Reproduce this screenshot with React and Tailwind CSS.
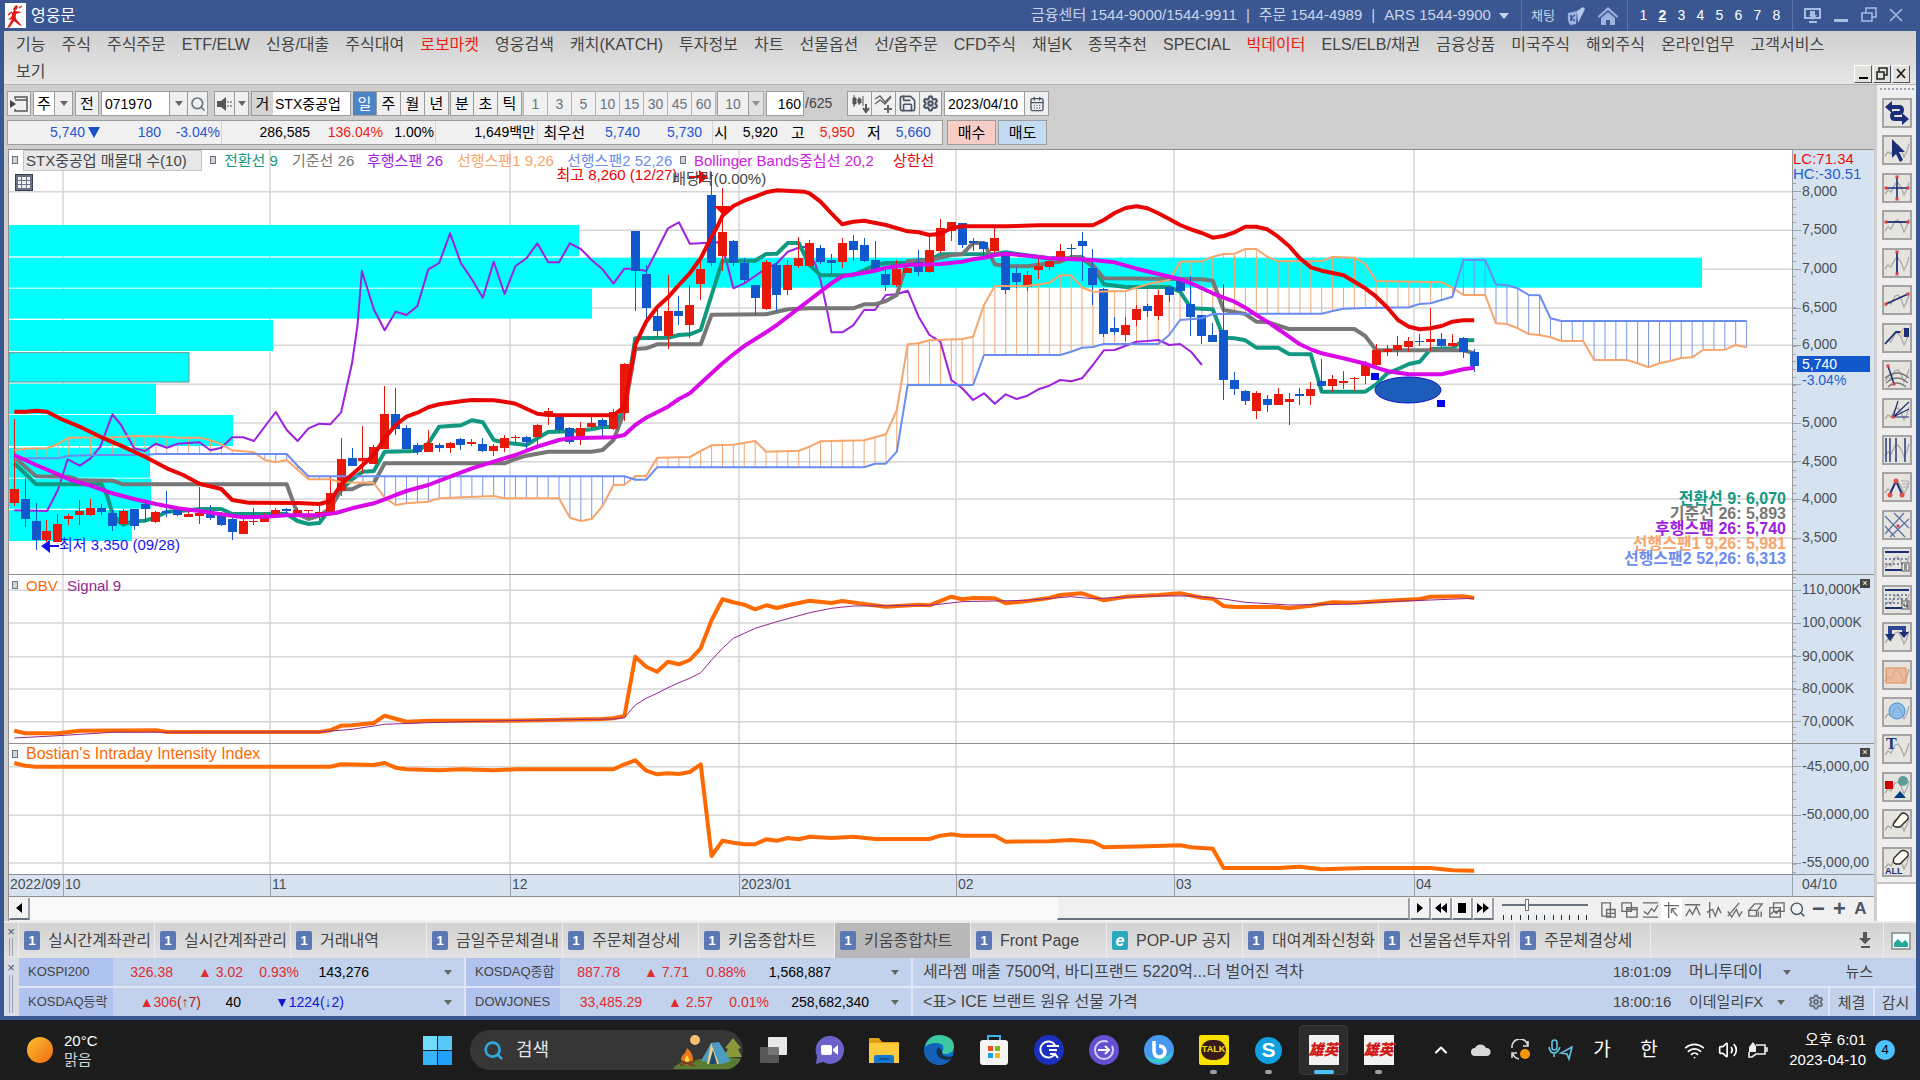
import { useState } from "react"
import { Search, Save, Settings, Wifi, Volume2, ChevronUp, CalendarDays } from "lucide-react"

const RED = "#e8190a"
const BLUE = "#1158cc"

// x position of a trading day and y position of a stored row (rows are thirds of a pixel)
const STEP = 10.895
const dayX = (i) => 5.3 + i * STEP
const rowY = (v, base = 15) => (v - base) / 3
const toPoints = (list, base) => list.map(([i, v]) => `${dayX(i).toFixed(1)},${rowY(v, base).toFixed(1)}`).join(" ")

// high, body top, body bottom, low, 1 = up
const candles = [
  [822, 1031, 1075, 1083, 1], [998, 1062, 1123, 1147, 0], [1073, 1129, 1185, 1215, 0], [1125, 1158, 1185, 1190, 1],
  [1107, 1137, 1190, 1190, 1], [1108, 1112, 1123, 1140, 1], [1065, 1098, 1109, 1140, 1], [1063, 1088, 1109, 1113, 1],
  [1077, 1088, 1101, 1109, 0], [1095, 1104, 1142, 1158, 0], [1093, 1098, 1137, 1142, 1], [1091, 1092, 1142, 1155, 0],
  [1067, 1077, 1093, 1132, 0], [1097, 1100, 1131, 1135, 1], [1038, 1098, 1105, 1117, 0], [1085, 1095, 1109, 1113, 0],
  [1088, 1107, 1116, 1117, 1], [1027, 1103, 1112, 1136, 1], [1080, 1101, 1119, 1124, 0], [1100, 1104, 1139, 1142, 0],
  [1120, 1121, 1161, 1184, 0], [1120, 1129, 1166, 1166, 1], [1090, 1128, 1131, 1139, 1], [1103, 1115, 1130, 1132, 1],
  [1090, 1095, 1115, 1117, 1], [1090, 1093, 1097, 1108, 0], [1090, 1095, 1109, 1115, 1], [1095, 1096, 1099, 1120, 1],
  [1083, 1100, 1116, 1125, 1], [993, 1044, 1108, 1108, 1], [878, 941, 1038, 1052, 1], [908, 938, 962, 962, 0],
  [843, 938, 947, 985, 1], [900, 905, 956, 958, 1], [723, 806, 911, 912, 1], [728, 806, 851, 870, 0],
  [840, 849, 911, 912, 0], [893, 899, 921, 930, 0], [855, 893, 921, 922, 1], [895, 900, 909, 922, 0],
  [892, 893, 909, 924, 1], [880, 881, 899, 915, 0], [883, 890, 897, 903, 1], [879, 896, 918, 920, 0],
  [897, 903, 917, 933, 1], [870, 878, 909, 922, 1], [870, 875, 879, 897, 1], [873, 875, 892, 912, 0],
  [836, 840, 877, 903, 1], [788, 799, 806, 840, 1], [809, 809, 855, 863, 0], [847, 849, 891, 898, 0],
  [831, 849, 883, 900, 1], [807, 833, 847, 855, 1], [820, 825, 843, 877, 0], [792, 802, 853, 855, 1],
  [655, 656, 804, 827, 1], [258, 258, 377, 497, 0], [360, 387, 490, 543, 0], [480, 514, 557, 575, 0],
  [390, 499, 574, 613, 1], [453, 499, 512, 540, 0], [420, 480, 541, 580, 1], [335, 372, 418, 465, 1],
  [80, 151, 355, 363, 0], [130, 262, 332, 378, 1], [285, 289, 354, 362, 0], [340, 354, 405, 410, 0],
  [420, 421, 460, 510, 0], [345, 350, 491, 495, 1], [350, 360, 449, 497, 0], [345, 360, 434, 450, 1],
  [275, 338, 362, 370, 1], [285, 293, 362, 363, 1], [300, 308, 352, 358, 0], [327, 346, 355, 388, 0],
  [279, 293, 352, 370, 1], [270, 289, 315, 348, 0], [280, 301, 348, 352, 0], [289, 346, 376, 377, 0],
  [370, 387, 419, 437, 0], [345, 372, 419, 427, 1], [355, 369, 385, 385, 1], [315, 352, 381, 392, 0],
  [277, 316, 381, 385, 1], [222, 248, 318, 325, 1], [230, 230, 257, 289, 1], [233, 234, 299, 308, 0],
  [278, 289, 295, 317, 0], [288, 292, 311, 332, 0], [243, 279, 318, 333, 1], [320, 320, 434, 448, 0],
  [367, 384, 411, 430, 0], [379, 390, 427, 437, 1], [331, 363, 374, 402, 1], [340, 349, 367, 375, 1],
  [297, 319, 341, 350, 1], [297, 308, 311, 337, 0], [262, 289, 302, 408, 0], [312, 368, 419, 480, 0],
  [430, 432, 567, 577, 0], [517, 548, 561, 570, 0], [517, 541, 570, 588, 1], [480, 492, 524, 543, 1],
  [477, 484, 498, 517, 0], [434, 450, 513, 525, 1], [425, 427, 449, 472, 0], [405, 409, 438, 440, 0],
  [393, 477, 516, 574, 0], [510, 511, 573, 597, 0], [533, 570, 592, 592, 0], [417, 555, 704, 765, 0],
  [682, 705, 731, 749, 0], [735, 738, 768, 780, 0], [738, 743, 798, 822, 1], [750, 761, 780, 802, 0],
  [730, 746, 780, 780, 1], [745, 761, 772, 840, 1], [730, 746, 752, 780, 0], [712, 731, 752, 780, 1],
  [641, 709, 722, 740, 0], [690, 701, 723, 740, 1], [678, 708, 714, 732, 1], [697, 698, 701, 737, 1],
  [648, 655, 692, 718, 1], [597, 614, 661, 670, 1], [600, 612, 621, 633, 1], [573, 600, 614, 633, 1],
  [575, 589, 607, 622, 1], [567, 589, 592, 603, 0], [490, 581, 592, 618, 1], [563, 581, 602, 605, 0],
  [567, 594, 604, 605, 1], [575, 579, 621, 640, 0], [612, 620, 664, 682, 0],
]

const upperBand = [[0,800],[1,800],[2,797],[3,800],[4.3,822],[6.2,848],[8,877],[10,905],[12,935],[14,970],[15.5,990],[17,1016],[19,1032],[20,1065],[21.5,1073],[26,1074],[28,1077],[29,1068],[30,1018],[31.7,968],[33,930],[34,880],[35,840],[36,815],[37,803],[38,787],[39,778],[41,769],[42,765],[44,766],[45,770],[46,776],[48,806],[49,810],[55,811],[56,785],[57,600],[57.7,550],[58,530],[59,487],[60,457],[61,420],[62,385],[63,340],[64,275],[64.6,240],[65,212],[66,183],[67,167],[68,155],[69,142],[70,136],[72.5,140],[73,145],[74,170],[75,205],[76,238],[77,230],[78,227],[80,240],[82,259],[83,262],[84,270],[85,266],[86,250],[87,244],[91,244],[94,241],[99,241],[100,225],[101,204],[102,189],[103,184],[104,190],[105,205],[106,222],[107,240],[108,253],[109,264],[110,278],[111,273],[112,262],[113,245],[114,245],[115,253],[116,275],[117,303],[118,340],[119,367],[120,377],[122,391],[123,410],[124,430],[125,455],[126,487],[127,525],[128,545],[129,553],[130,550],[131,543],[132,530],[133,526],[134,526]]
const midBand = [[0,930],[2,960],[4.3,992],[5,1003],[7,1022],[9,1045],[11,1062],[13,1077],[15,1090],[17,1098],[19,1108],[21,1117],[23,1115],[25,1111],[28,1110],[29.5,1104],[31,1090],[33,1075],[34,1063],[35,1050],[36,1038],[38,1020],[40,995],[42,970],[44,950],[46,930],[48,905],[50,885],[51,880],[53,878],[55,877],[56,870],[57,840],[58,818],[60,785],[61,762],[62,745],[63,715],[64,685],[65,655],[66,628],[67,603],[69,562],[70,540],[71,515],[73,465],[74,440],[75,415],[76,394],[78,383],[79,377],[80,368],[82,360],[85,357],[87,350],[88,343],[89,338],[90,330],[91,326],[93,332],[95,340],[99,345],[101,352],[103,371],[105,387],[107,403],[108,415],[110,445],[111,458],[112,470],[113,488],[114,510],[115,530],[116,552],[117,575],[118,598],[119,613],[120,625],[122,640],[124,656],[125,668],[126,678],[127,683],[128,688],[131,688],[132,680],[133,673],[134,668]]
const conversion = [[0,955],[2,1018],[8,1018],[8.5,1050],[9,1105],[9.6,1130],[10,1139],[11,1128],[12,1127],[13,1117],[14,1100],[16,1096],[17,1092],[19,1092],[20,1107],[25,1107],[26,1128],[27,1137],[28,1134],[29,1090],[30,1035],[31,1003],[32,980],[33,978],[34,920],[37,918],[38,895],[39,845],[41,841],[42,826],[43,832],[44,885],[45,893],[47,900],[48,880],[49,861],[51,859],[53,853],[54,846],[55,846],[56,790],[57,580],[60,578],[61,570],[62,568],[63,555],[64,450],[65,347],[68,347],[69,327],[70,326],[71,294],[72,294],[73,360],[74,391],[77,391],[79,360],[80,354],[82,354],[83,345],[84,345],[85,328],[90,327],[91,322],[95,340],[98,340],[99,365],[100,418],[102,426],[106,426],[107,440],[108,490],[110,493],[111,578],[112,580],[113,586],[114,608],[116,608],[117,627],[119,628],[120,740],[124,740],[125,718],[126,685],[127,672],[128,657],[129,650],[130,612],[132,610],[133,586],[134,586]]
const baseLine = [[0,935],[1,965],[2,994],[5,995],[6,1006],[9,1007],[10,1018],[25,1018],[26,1107],[27,1122],[28,1112],[29,1090],[30,1033],[31,1033],[32,1017],[33,1015],[34,955],[45,955],[46,942],[47,932],[49,920],[53,920],[54,915],[55,885],[56,800],[57,612],[58,610],[59,598],[63,598],[64,509],[69,508],[71,493],[73,490],[77,490],[78,478],[79,478],[80,468],[81,450],[82,348],[84,346],[86,330],[87,328],[88,294],[89,294],[90,358],[91,364],[93,364],[96,350],[97,336],[98,336],[99,360],[100,400],[109,403],[110,407],[111,495],[113,507],[114,530],[115,531],[117,552],[123,552],[124,573],[125,616],[133,616],[134,625]]
const lagging = [[0,1096],[3,1098],[4,1035],[4.9,943],[6,962],[7,940],[7.9,905],[9,808],[9.8,840],[11,910],[12,918],[13,896],[14,908],[15,896],[17,892],[18,916],[19,908],[20,877],[21,877],[22,888],[24,801],[25,855],[26,888],[27,850],[28,836],[29,838],[30,802],[31,655],[31.5,540],[31.9,378],[33,493],[34,556],[35,500],[36,510],[37,483],[38,373],[39,354],[40,265],[41,355],[42,403],[43,458],[44,350],[45,447],[46,363],[47,340],[48,295],[49,352],[50,352],[51,295],[52,312],[53,345],[54,373],[55,416],[56,371],[57,371],[58,378],[59,315],[60,250],[61,232],[62,296],[64.6,292],[65.3,340],[66,430],[67,415],[68,393],[69,370],[70,355],[71,320],[72,308],[72.6,305],[73.5,355],[74,405],[74.5,480],[75,562],[76,562],[77,541],[78,495],[79,495],[80,450],[81,448],[82,437],[83,515],[84,570],[85,590],[86,705],[87,730],[88,765],[89,745],[90,776],[91,748],[92,762],[93,752],[94,733],[95,722],[96,705],[97,709],[98,700],[99,660],[100,616],[101,615],[102,602],[103,590],[104,588],[105,585],[106,600],[107,597],[108,620],[109,660]]
const spanA = [[0,915],[1,911],[3,910],[4,897],[5,878],[9,877],[11,873],[14,875],[15,878],[17,878],[18,886],[19,898],[20,916],[22,922],[23,945],[24,952],[25,945],[27,1003],[29,1003],[30,1012],[33,1014],[34,1058],[35,1080],[36,1075],[38,1070],[39,1060],[44,1053],[45,1060],[50,1060],[51,1118],[52,1128],[53,1122],[54,1083],[55,1020],[56,1019],[57,993],[58,993],[59,938],[62,936],[63,918],[64,901],[66,899],[68,888],[69,920],[72,917],[73,905],[74,889],[78,886],[80,868],[81,795],[82,598],[83,595],[84,586],[87,582],[88,575],[89,480],[90,423],[93,423],[95,413],[96,391],[97,391],[98,427],[99,440],[102,438],[104,418],[106,405],[107,350],[109,349],[110,335],[111,327],[112,326],[113,312],[114,312],[115,335],[116,349],[120,348],[121,336],[123,338],[124,357],[125,408],[131,412],[132,428],[133,450],[135,450],[136,535],[137,537],[138,550],[139,567],[140,570],[141,577],[142,588],[144,588],[145,645],[148,645],[149,655],[150,667],[151,655],[152,648],[153,639],[154,637],[155,615],[157,614],[158,600],[159,607]]
const spanB = [[0,940],[4,940],[5,932],[8,930],[12,930],[13,927],[25,927],[26,962],[27,994],[56,994],[57,1004],[58,1004],[59,967],[78,967],[79,956],[80,956],[81,920],[82,720],[88,720],[89,630],[96,630],[97,620],[98,608],[99,606],[100,597],[105,597],[106,570],[107,525],[109,520],[110,507],[120,506],[121,498],[122,491],[124,489],[128,487],[129,477],[130,475],[132,455],[133,345],[135,345],[136,418],[137,421],[138,430],[139,450],[140,451],[141,520],[142,528],[159,528]]
const obv = [[0,482],[1,490],[4,490],[6,482],[13,481],[14,486],[28,486],[29,481],[30,467],[31,466],[33,459],[34,437],[36,455],[38,452],[45,452],[54,447],[55,445],[56,438],[57,260],[58,290],[59,305],[60,275],[61,283],[62,270],[63,235],[64,150],[65,88],[66,97],[67,104],[68,118],[69,106],[70,114],[71,106],[73,92],[75,99],[76,93],[78,102],[80,110],[83,104],[84,106],[86,80],[87,88],[88,84],[90,85],[91,100],[93,93],[95,84],[96,75],[98,70],[100,91],[102,80],[105,75],[107,70],[109,83],[110,86],[111,108],[112,111],[116,111],[117,115],[119,107],[121,97],[123,98],[126,92],[129,87],[130,80],[133,79],[134,84]]
const signal = [[0,504],[4,497],[9,487],[28,486],[31,478],[34,463],[38,458],[45,452],[55,447],[56,443],[57,405],[58,385],[59,370],[60,353],[61,338],[62,325],[63,308],[64,270],[65,235],[66,205],[67,190],[68,175],[70,155],[73,128],[75,115],[77,108],[84,106],[87,95],[93,91],[97,80],[99,86],[104,78],[108,78],[111,87],[113,97],[117,105],[122,103],[126,95],[130,90],[134,85]]
const intensity = [[0,579],[1,587],[2,590],[29,590],[30,583],[33,585],[34,579],[35,593],[36,598],[39,601],[41,598],[44,601],[46,598],[55,598],[56,583],[57,571],[58,602],[59,613],[60,610],[61,612],[62,606],[63,583],[64,858],[65,812],[66,818],[67,823],[68,823],[69,808],[70,812],[71,804],[72,808],[73,800],[75,804],[77,800],[79,807],[84,807],[85,797],[86,793],[87,797],[90,797],[91,815],[95,814],[97,810],[99,815],[100,832],[104,829],[107,826],[108,832],[110,836],[111,894],[116,894],[118,890],[120,898],[124,894],[130,894],[132,901],[134,902]]

// top, bottom, width of each price band
const volumeBars = [
  [240, 334, 570], [338, 428, 1693], [431, 521, 583], [525, 618, 264], [623, 711, 180],
  [716, 807, 147], [810, 903, 224], [908, 998, 141], [1001, 1091, 142], [1095, 1188, 123],
]
const months = [54, 261, 501, 730, 947, 1165, 1405]

function valueAt(list, i) {
  for (let k = 1; k < list.length; k++) {
    const [a, va] = list[k - 1]
    const [b, vb] = list[k]
    if (i <= b) return va + ((vb - va) * (i - a)) / (b - a)
  }
  return list[list.length - 1][1]
}

function Grid({ rows, base, height }) {
  return (
    <g stroke="#d6d6d6" strokeWidth="1.5">
      {rows.map((v) => <line key={v} x1="0" x2="1783" y1={rowY(v, base)} y2={rowY(v, base)} />)}
      {months.map((x) => <line key={x} x1={x} x2={x} y1="0" y2={height} />)}
    </g>
  )
}

function Line({ data, base, color, width = 2 }) {
  return <polyline points={toPoints(data, base)} fill="none" stroke={color} strokeWidth={width} strokeLinejoin="round" />
}

function Axis({ rows, labels, base, height, minor, start }) {
  const gap = rows[1] - rows[0]
  const ticks = []
  for (let v = rows[0] - gap * 6; v < height * 3 + base; v += gap / minor) {
    if (v > start) ticks.push(v)
  }
  return (
    <svg className="block h-full w-full" viewBox={`0 0 81 ${height}`}>
      <g stroke="#9aa2aa" shapeRendering="crispEdges">
        {ticks.map((v) => <line key={v} x1="0" x2="3" y1={rowY(v, base)} y2={rowY(v, base)} />)}
        {rows.map((v) => <line key={v} x1="0" x2="8" y1={rowY(v, base)} y2={rowY(v, base)} />)}
      </g>
      {rows.map((v, k) => (
        <text key={v} x="9" y={rowY(v, base) + 4} fontSize="14" fill="#4a4e54">{labels[k]}</text>
      ))}
    </svg>
  )
}

function Marker() {
  return <span className="h-[8px] w-[6px] shrink-0 border border-gray-500 bg-gray-300" />
}

const priceRows = [140, 256, 373, 489, 601, 718, 834, 950, 1062, 1179]
const priceLabels = ["8,000", "7,500", "7,000", "6,500", "6,000", "", "5,000", "4,500", "4,000", "3,500"]

function PricePanel() {
  const hatch = []
  for (let i = 0; i < 160; i++) {
    const a = valueAt(spanA, i)
    const b = valueAt(spanB, i)
    if (Math.abs(a - b) > 8) hatch.push([i, a, b])
  }
  return (
    <section className="flex h-[425px] border-b border-[#8f8f8f]">
      <div className="relative min-w-0 flex-1">
        <svg className="block h-full w-full" viewBox="0 0 1783 424" preserveAspectRatio="none">
          <Grid rows={priceRows} base={15} height={424} />
          {volumeBars.map(([t, b, w], k) => (
            <rect key={t} x="0" y={rowY(t)} width={w} height={(b - t) / 3} fill="#00ffff" stroke={k === 4 ? "#6d8f8f" : "none"} />
          ))}
          {hatch.map(([i, a, b]) => (
            <line key={i} x1={dayX(i)} x2={dayX(i)} y1={rowY(a)} y2={rowY(b)} stroke={a < b ? "#f4a66e" : "#7a96ec"} />
          ))}
          <Line data={lagging} color="#a020e0" />
          <Line data={conversion} color="#119880" width={4} />
          <Line data={baseLine} color="#777777" width={4} />
          <g shapeRendering="crispEdges">
            {candles.map(([h, t, b, l, up], i) => (
              <g key={i} fill={up ? RED : BLUE}>
                <rect x={dayX(i) - 0.5} y={rowY(h)} width="1" height={(l - h) / 3} />
                <rect x={dayX(i) - 4.5} y={rowY(t)} width="9" height={Math.max((b - t) / 3, 1)} />
              </g>
            ))}
          </g>
          <Line data={spanA} color="#f8a56c" />
          <Line data={spanB} color="#6b8cf0" />
          <Line data={midBand} color="#d808e8" width={4} />
          <Line data={upperBand} color="#ea0505" width={4} />
          <path d="M705 56h18l-9 9z" fill="#f00" />
          <path d="M680 26h10v-6l9 7l-9 7v-6h-10z" fill="#f00" />
          <path d="M32 396l9-6v5h9v2h-9v6z" fill="#1414f0" />
          <ellipse cx="1399" cy="240" rx="33" ry="13" fill="#1e5cba" stroke="#0a14c8" />
          <rect x="1362" y="223" width="8" height="7" fill="#0000ff" />
          <rect x="1428" y="250" width="8" height="7" fill="#0000ff" />
        </svg>
        <div className="absolute left-[3px] top-0 flex h-[20px] items-center whitespace-nowrap text-[15px] leading-none">
          <Marker />
          <span className="ml-[5px] w-[179px] overflow-hidden border border-[#c4c4c4] bg-[#e8e8e8] p-[2px] text-[#444]">STX중공업 매물대 수(10)</span>
          <span className="ml-[8px] flex items-center"><Marker /></span>
          <span className="ml-[8px] w-[68px] text-[#119880]">전환선 9</span>
          <span className="w-[75px] text-[#777]">기준선 26</span>
          <span className="w-[90px] text-[#a020e0]">후행스팬 26</span>
          <span className="w-[110px] text-[#f8a56c]">선행스팬1 9,26</span>
          <span className="w-[113px] text-[#6b8cf0]">선행스팬2 52,26</span>
          <Marker />
          <span className="ml-[8px] w-[199px] text-[#d020e0]">Bollinger Bands중심선 20,2</span>
          <span className="text-[#ea0505]">상한선</span>
        </div>
        <button aria-label="데이터 표" className="absolute left-[6px] top-[24px] grid h-[17px] w-[18px] grid-cols-3 gap-px border border-gray-700 bg-gray-500 p-[2px]">
          {Array.from({ length: 9 }, (_, k) => <span key={k} className="bg-gray-100" />)}
        </button>
        <span className="absolute left-[30.7%] top-[16px] whitespace-nowrap text-[15px] leading-[18px] text-[#f00000]">최고 8,260 (12/27)</span>
        <span className="absolute left-[37.2%] top-[20px] whitespace-nowrap text-[15px] leading-[18px] text-[#444]">배당락(0.00%)</span>
        <span className="absolute left-[2.8%] top-[386px] whitespace-nowrap text-[15px] leading-[18px] text-[#1414f0]">최저 3,350 (09/28)</span>
        <div className="absolute bottom-[8px] right-[6px] text-right text-[16px] font-bold leading-[15px]">
          <p className="text-[#119880]">전환선 9: 6,070</p>
          <p className="text-[#777]">기준선 26: 5,893</p>
          <p className="text-[#a020e0]">후행스팬 26: 5,740</p>
          <p className="text-[#f8a56c]">선행스팬1 9,26: 5,981</p>
          <p className="text-[#6b8cf0]">선행스팬2 52,26: 6,313</p>
        </div>
      </div>
      <div className="relative w-[82px] border-l border-[#9a9a9a] bg-[#d6e2f0]">
        <Axis rows={priceRows} labels={priceLabels} base={15} height={424} minor={5} start={100} />
        <div className="absolute left-0 top-px whitespace-nowrap text-[15px] leading-[15px]">
          <p className="text-[#e81010]">LC:71.34</p>
          <p className="text-[#2060d0]">HC:-30.51</p>
        </div>
        <div className="absolute left-[4px] top-[206px] w-[73px] text-[14px] leading-[16px]">
          <p className="bg-[#1158cc] pl-[5px] text-white">5,740</p>
          <p className="pl-[5px] text-[#2060d0]">-3.04%</p>
        </div>
      </div>
    </section>
  )
}

function CloseMark() {
  return <button aria-label="닫기" className="absolute right-[4px] top-[4px] flex h-[9px] w-[10px] items-center justify-center bg-[#444] text-[9px] leading-none text-white">×</button>
}

function ObvPanel() {
  const rows = [61, 159, 260, 357, 455]
  return (
    <section className="flex h-[169px] border-b border-[#8f8f8f]">
      <div className="relative min-w-0 flex-1">
        <svg className="block h-full w-full" viewBox="0 0 1783 168" preserveAspectRatio="none">
          <Grid rows={rows} base={15} height={168} />
          <Line data={obv} base={15} color="#ff6a00" width={4} />
          <Line data={signal} base={15} color="#92278f" width={1} />
        </svg>
        <div className="absolute left-[3px] top-0 flex h-[20px] items-center text-[15px] leading-none">
          <Marker />
          <span className="ml-[8px] w-[41px] text-[#ff6a00]">OBV</span>
          <span className="text-[#92278f]">Signal 9</span>
        </div>
      </div>
      <div className="relative w-[82px] border-l border-[#9a9a9a] bg-[#d6e2f0]">
        <Axis rows={rows} labels={["110,000K", "100,000K", "90,000K", "80,000K", "70,000K"]} base={15} height={168} minor={5} start={20} />
        <CloseMark />
      </div>
    </section>
  )
}

function IntensityPanel() {
  const rows = [590, 736, 879]
  return (
    <section className="flex h-[131px] border-b border-[#8f8f8f]">
      <div className="relative min-w-0 flex-1">
        <svg className="block h-full w-full" viewBox="0 0 1783 130" preserveAspectRatio="none">
          <Grid rows={rows} base={522} height={130} />
          <Line data={intensity} base={522} color="#ff6a00" width={4} />
        </svg>
        <div className="absolute left-[3px] top-0 flex h-[20px] items-center text-[16px] leading-none">
          <Marker />
          <span className="ml-[8px] text-[#ff6a00]">Bostian's Intraday Intensity Index</span>
        </div>
      </div>
      <div className="relative w-[82px] overflow-hidden border-l border-[#9a9a9a] bg-[#d6e2f0]">
        <Axis rows={rows} labels={["-45,000,00", "-50,000,00", "-55,000,00"]} base={522} height={130} minor={6} start={530} />
        <CloseMark />
      </div>
    </section>
  )
}

function DateRow() {
  return (
    <div className="flex h-[22px] border-b border-[#8f8f8f] bg-[#d6e2f0] text-[14px] leading-[18px] text-[#4a4e54]">
      <span className="w-[54px] pl-px">2022/09</span>
      <span className="w-[207px] border-l border-gray-400 pl-px">10</span>
      <span className="w-[240px] border-l border-gray-400 pl-px">11</span>
      <span className="w-[229px] border-l border-gray-400 pl-px">12</span>
      <span className="w-[217px] border-l border-gray-400 pl-px">2023/01</span>
      <span className="w-[218px] border-l border-gray-400 pl-px">02</span>
      <span className="w-[240px] border-l border-gray-400 pl-px">03</span>
      <span className="min-w-0 flex-1 border-l border-gray-400 pl-px">04</span>
      <span className="w-[82px] border-l border-gray-400 pl-[9px]">04/10</span>
    </div>
  )
}

const miniIcons = [
  "M3 3h9v14h-9zM8 10h9v8h-9zM12 10v8M8 14h9",
  "M2 3h10v9h-10zM7 8h11v10h-11zM7 10h11",
  "M2 3h16M2 18h16M3 12l4 3l4-6l3 3l4-7",
  "M2 6h16M7 2v17M10 9l6 8M10 9v5M10 9h5",
  "M2 5h16M3 17l4-7l3 5l4-8l4 9",
  "M6 2v17M3 13l6-3l3 7l3-9l3 6",
  "M3 17l12-14M3 12l4 6l5-8l3 7l3-5",
  "M3 11l6-7h8l-5 7zM3 11v6h8v-6M13 12v6M16 12v6",
  "M7 3h11v9h-11zM3 8h11v10h-11zM4 15l3-3l3 2l3-4",
]

function ScrollRow() {
  const play = "flex w-[21px] shrink-0 items-center justify-center border-b-2 border-r-2 border-l border-b-gray-500 border-r-gray-400 border-l-white bg-[#f2f2f2] text-black"
  return (
    <div className="flex h-[24px] items-stretch bg-[#f0f0f0] py-px">
      <button aria-label="왼쪽으로" className={play}>
        <svg width="6" height="10"><path d="M6 0v10L0 5z" /></svg>
      </button>
      <div className="flex min-w-0 flex-1 justify-end bg-[#f9f9f9]">
        <div className="w-[353px] border-b-2 border-r-2 border-l border-b-gray-500 border-r-gray-400 border-l-white bg-[#f0f0f0]" />
      </div>
      <button aria-label="재생" className={play}><svg width="6" height="10"><path d="M0 0v10l6-5z" /></svg></button>
      <button aria-label="뒤로" className={play}><svg width="12" height="10"><path d="M6 0v10L0 5zM12 0v10L6 5z" /></svg></button>
      <button aria-label="정지" className={play}><svg width="8" height="10"><path d="M0 0h8v10H0z" /></svg></button>
      <button aria-label="앞으로" className={play}><svg width="12" height="10"><path d="M0 0v10l6-5zM6 0v10l6-5z" /></svg></button>
      <div className="flex w-[104px] flex-col items-center justify-between pr-[2px] pt-[6px]">
        <input type="range" aria-label="확대 비율" defaultValue="28" className="h-[2px] w-[86px] appearance-none bg-gray-500 [&::-webkit-slider-thumb]:h-[12px] [&::-webkit-slider-thumb]:w-[4px] [&::-webkit-slider-thumb]:appearance-none [&::-webkit-slider-thumb]:border [&::-webkit-slider-thumb]:border-gray-500 [&::-webkit-slider-thumb]:bg-white" />
        <div className="flex w-[84px] justify-between">
          {Array.from({ length: 11 }, (_, k) => <span key={k} className="h-[5px] w-px bg-gray-800" />)}
        </div>
      </div>
      <div className="flex pr-[3px]">
        {miniIcons.map((d, k) => (
          <button key={d} aria-label={`차트 도구 ${k + 1}`} className={`flex w-[21px] shrink-0 items-center justify-center ${k === 3 ? "bg-white" : ""}`}>
            <svg width="19" height="19" viewBox="0 0 20 20" fill="none" stroke="#6a6a6a" strokeWidth="1.4"><path d={d} /></svg>
          </button>
        ))}
        <button aria-label="돋보기" className="flex w-[21px] shrink-0 items-center justify-center text-gray-600"><Search size={17} /></button>
        <button className="w-[21px] shrink-0 text-[22px] font-bold leading-[20px] text-gray-600">−</button>
        <button className="w-[21px] shrink-0 text-[22px] font-bold leading-[20px] text-gray-600">+</button>
        <button className="w-[21px] shrink-0 text-[17px] font-bold leading-[22px] text-gray-600">A</button>
      </div>
    </div>
  )
}

function Wave() {
  return <path d="M3 21l3-4l3 2l4-8l3-1l3 4l3 8l3-6l2-7" fill="none" stroke="#a9a9a9" strokeWidth="1.3" />
}

function Dot({ x, y }) {
  return <rect x={x - 1.5} y={y - 1.5} width="3" height="3" fill="#e04040" />
}

const N = "#1c2f78"
const drawTools = [
  ["순환", <g key="i"><path d="M9 9h8q3 0 3 3t-3 3h-4q-3 0-3 3t3 3h8" fill="none" stroke={N} strokeWidth="4" /><path d="M10 3v12L3 9zM20 15v12l7-6z" fill={N} /></g>],
  ["선택", <path key="i" d="M10 4v19l4-4l4 8l3-2l-4-8h6z" fill={N} />],
  ["십자선", <g key="i"><path d="M3 15h24M15 3v24" stroke={N} strokeWidth="1.6" /><Dot x={4} y={15} /><Dot x={26} y={15} /><Dot x={15} y={4} /><Dot x={15} y={26} /></g>],
  ["수평선", <g key="i"><path d="M3 12h24" stroke={N} strokeWidth="1.8" /><Dot x={4} y={12} /><Dot x={26} y={12} /></g>],
  ["수직선", <g key="i"><path d="M15 3v24" stroke={N} strokeWidth="1.8" /><Dot x={15} y={4} /><Dot x={15} y={26} /></g>],
  ["추세선", <g key="i"><path d="M4 19l22-10" stroke={N} strokeWidth="1.6" /><Dot x={4} y={19} /><Dot x={26} y={9} /></g>],
  ["연필", <g key="i"><path d="M3 21L14 9h5" fill="none" stroke={N} strokeWidth="1.8" /><path d="M18 9l4-4h5v9h-5z" fill={N} /><path d="M18 9l4-4v9z" fill="#f3d38a" /></g>],
  ["피보나치 원", <g key="i"><path d="M3 18q12-10 24 0M4 23q11-10 22 0M6 27q9-8 18 0" fill="none" stroke="#777" strokeWidth="1.3" /><path d="M6 6l6 18" stroke={N} strokeWidth="1.5" /><Dot x={6} y={6} /><Dot x={12} y={24} /></g>],
  ["부채꼴", <g key="i"><path d="M11 19L16 3M11 19L27 4M11 19L27 11M11 19h16" stroke={N} strokeWidth="1.2" /><Dot x={11} y={19} /></g>],
  ["시간대", <path key="i" d="M4 3v24M8 3v24M14 3v24M23 3v24" stroke={N} strokeWidth="1.4" />],
  ["파동", <g key="i"><path d="M8 22l6-13l6 13" fill="none" stroke={N} strokeWidth="2" /><circle cx="14" cy="9" r="2.5" fill="#e05050" /><circle cx="8" cy="23" r="2.5" fill="#e05050" /><circle cx="20" cy="23" r="2.5" fill="#e05050" /><path d="M19 9h7M20 12h7M21 15h6" stroke="#aaa" /></g>],
  ["격자", <g key="i"><path d="M3 6l20 21M12 3l15 15M3 24L22 3M8 27L27 9M3 16l10 11" stroke="#5870a8" strokeWidth="1.2" /><Dot x={16} y={16} /></g>],
  ["3등분선", <g key="i"><path d="M3 5h24M3 23h24" stroke={N} strokeWidth="2" /><path d="M3 12h24M3 17h24" stroke={N} strokeDasharray="2 2" /><rect x="20" y="16" width="7" height="8" fill="#eee" stroke="#555" /><path d="M22 18h3M22 20h3M22 22h3" stroke="#333" /></g>],
  ["4등분선", <g key="i"><path d="M3 5h24M3 23h24" stroke={N} strokeWidth="2" /><path d="M3 10h24M3 14h24M3 18h24" stroke={N} strokeDasharray="2 2" /><rect x="20" y="16" width="7" height="8" fill="#eee" stroke="#555" /><path d="M25 17v6M22 18v3h4" stroke="#333" fill="none" /></g>],
  ["되돌림", <g key="i"><path d="M8 14V6h14v5" fill="none" stroke="#2c4594" strokeWidth="4" /><path d="M3 12h10l-5 7zM17 10h10l-5 6z" fill={N} /></g>],
  ["사각형", <rect key="i" x="4" y="8" width="20" height="15" fill="#f0a880" fillOpacity="0.7" stroke="#e88850" />],
  ["원", <circle key="i" cx="15" cy="14" r="8" fill="#70b0ea" fillOpacity="0.75" stroke="#4890d8" />],
  ["문자", <text key="i" x="4" y="15" fontSize="16" fontWeight="700" fontFamily="Liberation Serif, serif" fill={N}>T</text>],
  ["도형", <g key="i"><rect x="3" y="9" width="8" height="8" fill="#d00000" /><circle cx="21" cy="9" r="5" fill="#5f9c98" /><path d="M18 19l6 7H12z" fill="#003c80" /></g>],
  ["지우개", <path key="i" d="M12 14l7-9q2-2 5 0l2 2q1 2-1 4l-7 7h-4q-4-1-2-4z" fill="#fffdf2" stroke="#222" strokeWidth="1.3" />],
  ["모두 지우기", <g key="i"><path d="M12 11l7-7q2-1 5 0l2 2q1 2-1 4l-7 7h-4q-4-1-2-6z" fill="#fffdf2" stroke="#222" strokeWidth="1.3" /><text x="3" y="27" fontSize="9" fontWeight="700" fill={N}>ALL</text></g>],
]

function DrawToolbar() {
  return (
    <aside className="flex w-[39px] shrink-0 flex-col bg-white">
      <div className="flex h-[799px] flex-col items-center border-b-2 border-[#c4c4c4] bg-[#efefef] pb-[5px] pt-[3px]">
        <div className="mb-[8px] h-0 w-[34px] border-t-2 border-dotted border-gray-400" />
        <div className="flex flex-1 flex-col justify-between">
          {drawTools.map(([label, icon]) => (
            <button key={label} aria-label={label} className="h-[30px] w-[30px] border-2 border-[#a4a4a4] bg-[#e5e4df]">
              <svg className="h-full w-full" viewBox="2 2 26 26">
                {label !== "순환" && label !== "격자" && <Wave />}
                {icon}
              </svg>
            </button>
          ))}
        </div>
      </div>
    </aside>
  )
}

function KiwoomMark() {
  return (
    <svg className="h-[25px] w-[21px] bg-white" viewBox="0 0 21 25">
      <path d="M11 2q3 1 1 4l-2 2l7 1l-6 2q-1 4 1 6l5 6l-3-1l-5-4l-4 6l-3 1l5-9l-4 1l4-4q-1-3 2-5l-1-2z" fill="#e01818" />
      <path d="M3 12l4-3M14 5l3-2" stroke="#e01818" strokeWidth="1.5" />
    </svg>
  )
}

function TitleBar() {
  const [screen, setScreen] = useState(2)
  return (
    <header className="flex h-[31px] items-center bg-[#3a5791] pl-[5px] text-[#c9d4ea]">
      <KiwoomMark />
      <h1 className="ml-[5px] flex-1 text-[16px] leading-none text-white">영웅문</h1>
      <p className="flex w-[468px] gap-[9px] whitespace-nowrap text-[15px]">
        <span>금융센터 1544-9000/1544-9911</span>
        <span>|</span>
        <span>주문 1544-4989</span>
        <span>|</span>
        <span>ARS 1544-9900</span>
      </p>
      <button aria-label="전화번호 더보기" className="w-[22px]">
        <svg width="10" height="6"><path d="M0 0h10L5 6z" fill="#c9d4ea" /></svg>
      </button>
      <div className="flex h-full w-[106px] items-center border-l border-[#5874aa] pl-[9px] text-[13px]">
        <button className="w-[35px] text-left">채팅</button>
        <button aria-label="키움" className="w-[32px]">
          <svg width="20" height="20" viewBox="0 0 20 20"><path d="M2 7l9-2l-1 13l-6 1q-3-5-2-12z" fill="#9db2de" /><path d="M11 5l6-4l2 2l-7 14z" fill="#b9c8ea" /><path d="M5 9v6M5 12l4-3M5 12l4 3" stroke="#3a5791" strokeWidth="1.5" /></svg>
        </button>
        <button aria-label="홈">
          <svg width="20" height="18" fill="#9db2de"><path d="M10 0l10 9l-1 2l-9-8l-9 8l-1-2z" /><path d="M3 11l7-6l7 6v7h-5v-5h-4v5H3z" /></svg>
        </button>
      </div>
      <nav className="flex h-full w-[165px] items-center border-l border-[#5874aa] pl-[6px]">
        {[1, 2, 3, 4, 5, 6, 7, 8].map((n) => (
          <button key={n} onClick={() => setScreen(n)} className={`w-[19px] text-[14px] leading-[17px] text-white ${screen === n ? "font-bold underline" : ""}`}>{n}</button>
        ))}
      </nav>
      <div className="flex h-full w-[128px] items-center gap-[12px] border-l border-[#5874aa] pl-[11px]">
        <button aria-label="화면"><svg width="17" height="17" fill="none" stroke="#a9bce4" strokeWidth="2"><path d="M1 2h15v9H1zM5 15h8" /><path d="M6 4h5v4h2l-4 5l-4-5h1z" fill="#a9bce4" stroke="none" /></svg></button>
        <button aria-label="최소화"><svg width="16" height="17"><path d="M1 12h14v3H1z" fill="#a9bce4" /></svg></button>
        <button aria-label="이전 크기"><svg width="16" height="17" fill="none" stroke="#a9bce4" strokeWidth="1.5"><path d="M5 6V1h10v9h-4M1 6h10v8H1z" /></svg></button>
        <button aria-label="닫기"><svg width="14" height="17" stroke="#a9bce4" strokeWidth="1.5"><path d="M1 2l12 12M13 2L1 14" /></svg></button>
      </div>
    </header>
  )
}

const menuItems = ["기능", "주식", "주식주문", "ETF/ELW", "신용/대출", "주식대여", "로보마켓", "영웅검색", "캐치(KATCH)", "투자정보", "차트", "선물옵션", "선/옵주문", "CFD주식", "채널K", "종목추천", "SPECIAL", "빅데이터", "ELS/ELB/채권", "금융상품", "미국주식", "해외주식", "온라인업무", "고객서비스", "보기"]

function MenuBar() {
  const mdi = "flex h-[18px] w-[18px] items-end justify-center border border-t-white border-l-white border-b-gray-600 border-r-gray-600 bg-[#e4e2dc]"
  return (
    <div className="flex h-[54px] items-end border-b border-[#b4b4b4] bg-linear-to-b from-[#d0d0d0] to-[#e6e6e6]">
      <nav className="flex flex-1 flex-wrap gap-x-4 self-start pl-[12px] text-[16px] leading-[27px] text-[#444]">
        {menuItems.map((m) => (
          <button key={m} className={m === "로보마켓" || m === "빅데이터" ? "text-[#f01c10]" : ""}>{m}</button>
        ))}
      </nav>
      <div className="flex gap-px pb-px pr-[6px]">
        <button aria-label="최소화" className={mdi}><span className="mb-[3px] h-[2px] w-[9px] bg-black" /></button>
        <button aria-label="이전 크기" className={mdi}><svg width="14" height="16" fill="none" stroke="#222" strokeWidth="1.5"><path d="M4 6V2h8v7H9M2 6h7v7H2z" /></svg></button>
        <button aria-label="닫기" className={mdi}><svg width="14" height="16" stroke="#222" strokeWidth="1.8"><path d="M3 3l8 9M11 3l-8 9" /></svg></button>
      </div>
    </div>
  )
}

const box = "flex h-[25px] shrink-0 items-center justify-center border border-[#9c9c9c] bg-[#f0f0f0]"

function Caret() {
  return <svg width="8" height="5"><path d="M0 0h8L4 5z" fill="#666" /></svg>
}

function Toolbar() {
  const [period, setPeriod] = useState("일")
  return (
    <div className="flex h-[25px] pl-[3px] text-[15px] leading-none text-black">
      <button aria-label="창 열기" className={`${box} w-[24px]`}>
        <svg width="18" height="16" fill="none" stroke="#555" strokeWidth="1.5"><path d="M5 3V1h12v14H5v-2M5 4h12" /><path d="M0 4v8l6-4z" fill="#444" stroke="none" /></svg>
      </button>
      <button className={`${box} ml-[2px] w-[22px] bg-white`}>주</button>
      <button aria-label="종류 선택" className={`${box} w-[18px] border-l-0`}><Caret /></button>
      <button className={`${box} ml-[2px] w-[24px]`}>전</button>
      <input aria-label="종목코드" defaultValue="071970" className="ml-[2px] h-[25px] w-[69px] border border-[#9c9c9c] bg-white pl-[3px] text-[14px] outline-none" />
      <button aria-label="종목 목록" className={`${box} w-[18px] border-l-0`}><Caret /></button>
      <button aria-label="종목 검색" className={`${box} w-[20px] border-l-0 text-gray-500`}><Search size={16} strokeWidth={2.5} /></button>
      <button aria-label="소리" className={`${box} ml-[6px] w-[21px]`}><svg width="16" height="14"><path d="M0 4h4l5-4v14l-5-4H0z" fill="#555" /><path d="M11 4v6M14 4v6" stroke="#555" strokeDasharray="2 2" /></svg></button>
      <button aria-label="소리 설정" className={`${box} w-[14px] border-l-0`}><Caret /></button>
      <div className={`${box} ml-[2px] w-[100px] justify-start bg-white`}>
        <span className="flex h-full w-[21px] items-center justify-center bg-[#d4d4d4]">거</span>
        <span className="overflow-hidden whitespace-nowrap pl-[2px] text-[14px]">STX중공업</span>
      </div>
      <div className="ml-[2px] flex">
        {["일", "주", "월", "년", "분", "초", "틱"].map((p) => (
          <button
            key={p}
            onClick={() => setPeriod(p)}
            className={`h-[25px] w-[24px] border-y border-r border-[#9c9c9c] ${p === "분" ? "ml-px border-l" : ""} ${period === p ? "bg-[#4d84c8] text-white" : "bg-[#f0f0f0]"}`}
          >
            {p}
          </button>
        ))}
      </div>
      <div className="ml-px flex border-l border-[#b4b4b4] text-gray-500">
        {[1, 3, 5, 10, 15, 30, 45, 60].map((n) => (
          <button key={n} className="h-[25px] w-[24px] border-y border-r border-[#b4b4b4] bg-[#f0f0f0] text-[14px]">{n}</button>
        ))}
      </div>
      <button className={`${box} ml-px w-[32px] text-[14px] text-gray-500`}>10</button>
      <button aria-label="분 단위" className={`${box} w-[15px] border-l-0 opacity-60`}><Caret /></button>
      <input aria-label="표시 개수" defaultValue="160" className="ml-[2px] h-[25px] w-[38px] border border-[#9c9c9c] bg-white pr-[2px] text-right text-[14px] outline-none" />
      <span className="w-[43px] pl-px pt-[5px] text-[14px] text-[#444]">/625</span>
      <button aria-label="지표 추가" className={`${box} w-[25px]`}><svg width="20" height="20" fill="none" stroke="#555"><path d="M4 1v12M9 3v8M13 2v10" /><path d="M3 4h3v6H3zM8 5h3v4H8z" fill="#555" /><path d="M16 10v8M13 14l3 4l3-4" strokeWidth="2" /></svg></button>
      <button aria-label="비교 추가" className={`${box} w-[24px] border-l-0`}><svg width="20" height="20" fill="none" stroke="#666" strokeWidth="1.4"><path d="M1 5l5-3l5 6l6-6M1 10l5-4l5 4l6-7" /><path d="M14 11v8M10 15h8" strokeWidth="2" /></svg></button>
      <button aria-label="저장" className={`${box} w-[24px] border-l-0 text-gray-600`}><Save size={19} /></button>
      <button aria-label="설정" className={`${box} w-[22px] border-l-0 text-gray-600`}><Settings size={17} strokeWidth={3} /></button>
      <input aria-label="조회 일자" defaultValue="2023/04/10" className="ml-[2px] h-[25px] w-[81px] border border-[#9c9c9c] bg-white pl-[3px] text-[14px] outline-none" />
      <button aria-label="달력" className={`${box} w-[24px] border-l-0 text-gray-600`}><CalendarDays size={16} /></button>
    </div>
  )
}

function QuoteRow() {
  return (
    <div className="mt-[4px] flex h-[25px] pl-[3px] text-[14px] leading-[23px] text-black">
      <div className="flex w-[936px] whitespace-nowrap border border-[#9c9c9c] bg-[#f0f0f0] text-right">
        <span className="flex w-[92px] items-center justify-end gap-[3px] text-[#2454d0]">5,740<svg width="12" height="11"><path d="M0 0h12L6 11z" fill="#1850c8" /></svg></span>
        <span className="w-[61px] text-[#2454d0]">180</span>
        <span className="w-[61px] border-r border-gray-300 pr-px text-[#2454d0]">-3.04%</span>
        <span className="w-[88px]">286,585</span>
        <span className="w-[73px] text-[#f01c10]">136.04%</span>
        <span className="w-[53px] border-r border-gray-300 pr-px">1.00%</span>
        <span className="w-[102px] border-r border-gray-300 pr-[2px]">1,649백만</span>
        <span className="w-[47px] text-[15px]">최우선</span>
        <span className="w-[55px] text-[#2454d0]">5,740</span>
        <span className="w-[62px] text-[#2454d0]">5,730</span>
        <span className="ml-[10px] border-l border-gray-300 pl-px text-[15px]">시</span>
        <span className="w-[50px]">5,920</span>
        <span className="w-[27px] text-[15px]">고</span>
        <span className="w-[50px] text-[#f01c10]">5,950</span>
        <span className="w-[26px] text-[15px]">저</span>
        <span className="w-[50px] text-[#2454d0]">5,660</span>
      </div>
      <button className="ml-[4px] w-[49px] border border-[#9c9c9c] bg-[#f8cdc8] text-[15px]">매수</button>
      <button className="ml-[2px] w-[49px] border border-[#9c9c9c] bg-[#c4dcf2] text-[15px]">매도</button>
    </div>
  )
}

const windowTabs = ["실시간계좌관리", "실시간계좌관리", "거래내역", "금일주문체결내", "주문체결상세", "키움종합차트", "키움종합차트", "Front Page", "POP-UP 공지", "대여계좌신청화", "선물옵션투자위", "주문체결상세"]

function WindowTabs() {
  const [active, setActive] = useState(6)
  return (
    <div className="flex h-[37px] border-t-2 border-[#ececec] bg-linear-to-b from-[#d2d2d2] to-[#e2e2e2]">
      <button aria-label="탭 닫기" className="w-[15px] border-r border-[#eee] text-[13px] leading-[12px] text-gray-600">×<span className="mx-auto block h-[18px] w-[4px] border-x border-gray-400" /></button>
      {windowTabs.map((t, i) => (
        <button key={i} onClick={() => setActive(i)} className={`flex w-[136px] shrink-0 items-center overflow-hidden whitespace-nowrap border-r border-[#eee] pl-[5px] text-[16px] text-[#444] ${active === i ? "bg-[#b9b9b9]" : ""}`}>
          {t === "POP-UP 공지" ? (
            <span className="flex h-[19px] w-[16px] shrink-0 items-center justify-center rounded-xs bg-[#2aa8bc] text-[16px] font-bold italic text-white">e</span>
          ) : (
            <span className="flex h-[19px] w-[16px] shrink-0 items-center justify-center rounded-xs bg-[#5a78b4] text-[13px] font-bold text-white">1</span>
          )}
          <span className="ml-[8px]">{t}</span>
        </button>
      ))}
      <div className="flex-1" />
      <button aria-label="내려받기" className="w-[38px] border-r border-[#eee] pl-[13px]"><svg width="12" height="17" fill="#555"><path d="M4 0h4v6h4l-6 6l-6-6h4zM2 14h9v2H2z" /></svg></button>
      <button aria-label="화면 저장" className="w-[32px] pl-[7px]"><svg width="20" height="18"><path d="M1 1h18v16H1z" fill="#f4ffff" stroke="#888" strokeWidth="1.5" /><path d="M3 15v-4l4-4l4 4l3-3l3 3v4z" fill="#28a89c" /></svg></button>
    </div>
  )
}

function Ticker({ name, children }) {
  return (
    <div className="flex w-[447px] shrink-0 items-center border-r-2 border-[#dfe5f2] pr-[12px]">
      <span className="h-full w-[94px] bg-[#b0c3ee] pl-[9px] text-[13px]">{name}</span>
      {children}
      <button aria-label={`${name} 선택`} className="ml-auto"><Caret /></button>
    </div>
  )
}

function Tickers() {
  return (
    <div className="flex bg-[#c3d2ec] text-[14px] text-[#444]">
      <button aria-label="시세바 닫기" className="w-[15px] self-stretch border-r border-[#e0e0e0] bg-[#d8dde8] text-[13px] leading-[14px] text-gray-600">×<span className="mx-auto block h-[38px] w-[4px] border-x border-gray-400" /></button>
      <div className="min-w-0 flex-1">
        <div className="flex h-[30px] whitespace-nowrap border-b-2 border-[#dfe5f2] leading-[28px]">
          <Ticker name="KOSPI200">
            <span className="w-[60px] text-right text-[#e02c2c]">326.38</span>
            <span className="w-[70px] text-right text-[#e02c2c]">▲ 3.02</span>
            <span className="w-[56px] text-right text-[#e02c2c]">0.93%</span>
            <span className="w-[70px] text-right text-black">143,276</span>
          </Ticker>
          <Ticker name="KOSDAQ종합">
            <span className="w-[60px] text-right text-[#e02c2c]">887.78</span>
            <span className="w-[69px] text-right text-[#e02c2c]">▲ 7.71</span>
            <span className="w-[57px] text-right text-[#e02c2c]">0.88%</span>
            <span className="w-[85px] text-right text-black">1,568,887</span>
          </Ticker>
          <a href="#news1" className="min-w-0 flex-1 overflow-hidden pl-[10px] text-[16px]">세라젬 매출 7500억, 바디프랜드 5220억...더 벌어진 격차</a>
          <span className="w-[76px] text-[15px]">18:01:09</span>
          <span className="w-[88px] text-[16px]">머니투데이</span>
          <button aria-label="언론사 선택" className="w-[68px] pl-[6px]"><Caret /></button>
          <button className="w-[71px] pr-[43px] text-right text-[15px]">뉴스</button>
        </div>
        <div className="flex h-[28px] whitespace-nowrap leading-[27px]">
          <Ticker name="KOSDAQ등락">
            <span className="w-[88px] text-right text-[#e02c2c]">▲306<span className="text-[#b01818]">(↑7)</span></span>
            <span className="w-[40px] text-right text-black">40</span>
            <span className="w-[103px] text-right text-[#1414d8]">▼1224(↓2)</span>
          </Ticker>
          <Ticker name="DOWJONES">
            <span className="w-[82px] text-right text-[#e02c2c]">33,485.29</span>
            <span className="w-[71px] text-right text-[#e02c2c]">▲ 2.57</span>
            <span className="w-[56px] text-right text-[#e02c2c]">0.01%</span>
            <span className="w-[100px] text-right text-black">258,682,340</span>
          </Ticker>
          <a href="#news2" className="min-w-0 flex-1 overflow-hidden pl-[10px] text-[16px]">&lt;표&gt; ICE 브랜트 원유 선물 가격</a>
          <span className="w-[76px] text-[15px]">18:00:16</span>
          <span className="w-[88px] text-[15px]">이데일리FX</span>
          <button aria-label="언론사 선택" className="w-[31px] text-left"><Caret /></button>
          <button aria-label="시세바 설정" className="w-[20px] text-gray-500"><Settings size={16} strokeWidth={3} /></button>
          <button className="w-[47px] border-x-2 border-[#dfe5f2] text-[15px]">체결</button>
          <button className="w-[41px] text-[15px]">감시</button>
        </div>
      </div>
    </div>
  )
}

function Campfire() {
  return (
    <svg width="70" height="38" viewBox="0 0 70 38">
      <path d="M0 38q6-9 20-8q25-8 48-2q0 6-8 10z" fill="#587c30" />
      <path d="M60 7l8 10l-3 1l4 8h-18l4-8l-3-1z" fill="#8a9a38" />
      <circle cx="22" cy="9" r="5" fill="#f6c070" />
      <path d="M28 30L38 12l8-1l12 19l-9 3z" fill="#4c9cc0" />
      <path d="M38 12l8 21H34z" fill="#e8cf90" /><path d="M40 19l4 14h-8z" fill="#1f4c6c" />
      <path d="M14 17q6 5 6 12q-1 5-6 5t-6-5q0-4 4-7z" fill="#f07818" /><path d="M14 24q3 4 2 8h-4q-1-4 2-8z" fill="#ffd850" />
      <path d="M7 34l15-4M8 30l14 5" stroke="#7a4420" strokeWidth="2" />
    </svg>
  )
}

const apps = [
  ["작업 보기", <svg key="a" width="28" height="28" viewBox="0 0 28 28"><rect x="8" y="1" width="19" height="18" rx="1" fill="#e8e8e8" /><rect x="0" y="11" width="19" height="16" rx="1" fill="#606060" fillOpacity="0.85" /></svg>],
  ["채팅", <svg key="a" width="30" height="30" viewBox="0 0 30 30"><path d="M15 1a14 14 0 1 1-6 26l-7 2l1-8A14 14 0 0 1 15 1z" fill="#6a62c8" /><rect x="7" y="10" width="11" height="10" rx="2" fill="#fff" /><path d="M19 14l5-4v10l-5-4z" fill="#fff" /></svg>],
  ["탐색기", <svg key="a" width="30" height="28" viewBox="0 0 30 28"><path d="M0 2h10l3 4h17v8H0z" fill="#e0a010" /><path d="M0 7h30v20H0z" fill="#fccb3c" /><path d="M5 27v-6q0-2 2-2h16q2 0 2 2v6z" fill="#1478d0" /><path d="M10 23h10" stroke="#0c5498" strokeWidth="2" /></svg>],
  ["Edge", <svg key="a" width="30" height="30" viewBox="0 0 30 30"><circle cx="15" cy="15" r="15" fill="#0d6cc4" /><path d="M1 12Q4 0 16 0q14 1 14 12q-1 7-8 7q-6 0-3-4q2-6-5-7Q5 8 1 12z" fill="#3cc8a0" /><path d="M15 10q-6 3-3 9q4 7 15 5q-6 7-14 6Q0 25 1 13q6-7 14-3z" fill="#1460b8" /><path d="M14 12q-4 6 2 11q5 3 11 1l2-3q-8 2-11-2q1-4-4-7z" fill="#1c1c1c" fillOpacity="0.75" /></svg>],
  ["스토어", <svg key="a" width="30" height="32" viewBox="0 0 30 32"><path d="M9 8V2h12v6" fill="none" stroke="#40b4f0" strokeWidth="2" /><rect x="1" y="6" width="28" height="25" rx="3" fill="#f4f4f4" /><path d="M9 12h5v5H9z" fill="#f05020" /><path d="M16 12h5v5h-5z" fill="#80b818" /><path d="M9 19h5v5H9z" fill="#18a0e8" /><path d="M16 19h5v5h-5z" fill="#f8b810" /></svg>],
  ["검색 앱", <svg key="a" width="30" height="30" viewBox="0 0 30 30"><circle cx="15" cy="15" r="15" fill="#1c30c0" /><path d="M21 10a8 8 0 1 0 0 9l3 4M13 11h12M15 15h8M16 19h4" fill="none" stroke="#fff" strokeWidth="2" /></svg>],
  ["전달", <svg key="a" width="30" height="30" viewBox="0 0 30 30"><circle cx="15" cy="15" r="15" fill="#6450d0" /><circle cx="15" cy="15" r="9" fill="none" stroke="#d8d0ff" strokeWidth="2" strokeDasharray="46 6" /><path d="M9 15h11M16 11l4 4l-4 4" fill="none" stroke="#fff" strokeWidth="2" /></svg>],
  ["빅스비", <svg key="a" width="30" height="30" viewBox="0 0 30 30"><circle cx="15" cy="15" r="15" fill="#4898f0" /><path d="M1 20q12 10 28-4a15 15 0 0 1-28 4z" fill="#30c8c8" /><path d="M10 6v10q0 6 6 6q5-1 5-6q-1-5-6-5" fill="none" stroke="#fff" strokeWidth="3.5" /></svg>],
  ["카카오톡", <span key="a" className="flex h-[30px] w-[30px] items-center justify-center rounded-xs bg-[#fae100]"><span className="flex h-[20px] w-[25px] items-center justify-center rounded-full bg-[#391b1b] text-[9px] font-bold text-[#fae100]">TALK</span></span>],
  ["스카이프", <span key="a" className="flex h-[27px] w-[27px] items-center justify-center rounded-full bg-[#10a0e0] text-[21px] font-bold text-white">S</span>],
  ["영웅문", <span key="a" className="flex h-[30px] w-[30px] items-center justify-center bg-[#f2f2f2] text-[15px] font-black italic text-[#d01818]">雄英</span>],
  ["영웅문 2", <span key="a" className="flex h-[30px] w-[30px] items-center justify-center bg-[#f2f2f2] text-[15px] font-black italic text-[#d01818]">雄英</span>],
]

function Taskbar() {
  return (
    <footer className="flex h-[60px] items-center bg-[#1c1c1c] text-white">
      <div className="flex w-[423px] items-center pl-[27px]">
        <span className="h-[26px] w-[26px] rounded-full bg-linear-to-br from-[#f8c030] to-[#f06810]" />
        <p className="ml-[11px] text-[15px] leading-[19px]">20°C<br /><span className="text-gray-300">맑음</span></p>
      </div>
      <button aria-label="시작" className="mr-[18px]">
        <span className="grid h-[29px] w-[29px] grid-cols-2 gap-px">
          <span className="bg-[#70dcfc]" /><span className="bg-[#58c8f8]" /><span className="bg-[#38b4f8]" /><span className="bg-[#20a0f8]" />
        </span>
      </button>
      <label className="flex h-[40px] w-[273px] items-center overflow-hidden rounded-full bg-[#363636] pl-[13px]">
        <Search size={21} color="#30a8e0" strokeWidth={3} />
        <input aria-label="검색" placeholder="검색" className="ml-[12px] w-[157px] bg-transparent text-[18px] outline-none placeholder:text-gray-200" />
        <Campfire />
      </label>
      <nav className="ml-[3px] flex">
        {apps.map(([label, icon], i) => (
          <button key={label} aria-label={label} className="relative flex h-[60px] w-[55px] items-center justify-center">
            {i === 10 && <span className="absolute inset-x-[3px] inset-y-[5px] rounded-sm border border-[#383838] bg-[#2c2c2c]" />}
            <span className="relative">{icon}</span>
            {i > 7 && <span className={`absolute bottom-[6px] h-[4px] rounded-full ${i === 10 ? "w-[20px] bg-[#4cc2ff]" : "w-[7px] bg-gray-400"}`} />}
          </button>
        ))}
      </nav>
      <div className="ml-auto flex items-center">
        <button aria-label="숨겨진 아이콘" className="flex w-[40px] justify-center"><ChevronUp size={20} strokeWidth={2.5} /></button>
        <button aria-label="OneDrive" className="flex w-[40px] justify-center"><svg width="22" height="14"><path d="M5 13a4 4 0 0 1 0-8a6 6 0 0 1 11 0a4 4 0 0 1 1 8z" fill="#d8d8d8" /></svg></button>
        <button aria-label="업데이트" className="flex w-[40px] justify-center"><svg width="22" height="22" fill="none" stroke="#ddd" strokeWidth="1.6"><path d="M2 9a8 8 0 0 1 16-2M18 2v5h-5M2 19v-5h5M3 15a8 8 0 0 0 6 5" /><circle cx="15" cy="15" r="5" fill="#f89808" stroke="none" /></svg></button>
        <button aria-label="마이크" className="flex w-[40px] justify-center"><svg width="26" height="22" fill="none" stroke="#60c4e4" strokeWidth="1.6"><rect x="4" y="1" width="5" height="10" rx="2.5" /><path d="M1 8q1 6 5 6t6-6M6 14v4M24 8l-11 6l6 1l2 5z" /></svg></button>
        <button className="w-[42px] text-[19px]">가</button>
        <button className="w-[52px] text-[19px]">한</button>
        <span className="flex w-[38px] justify-center"><Wifi size={21} /></span>
        <span className="flex w-[30px] justify-center"><Volume2 size={20} /></span>
        <span className="flex w-[28px] justify-center"><svg width="21" height="18" fill="none" stroke="#eee" strokeWidth="1.6"><path d="M9 4h9v9H9l-4 3H2v-5M18 7h2v3h-2" /><path d="M2 11V6l4-5l3 4v6z" fill="#eee" stroke="none" /></svg></span>
        <p className="ml-[10px] w-[85px] text-right text-[15px] leading-[20px]">오후 6:01<br />2023-04-10</p>
        <span className="ml-[9px] mr-[25px] flex h-[20px] w-[20px] items-center justify-center rounded-full bg-[#4cc2ff] text-[13px] text-black">4</span>
      </div>
    </footer>
  )
}

export default function App() {
  return (
    <div className="w-full bg-[#3a5791] font-['Liberation_Sans','Noto_Sans_CJK_KR',sans-serif]">
      <TitleBar />
      <main className="mx-[4px] bg-[#e8e8e8]">
        <MenuBar />
        <div className="flex">
          <div className="min-w-0 flex-1 bg-[#cecece] pt-[6px]">
            <Toolbar />
            <QuoteRow />
            <div className="ml-[4px] mr-[3px] mt-[4px] border-l border-t border-[#8f8f8f] bg-white">
              <PricePanel />
              <ObvPanel />
              <IntensityPanel />
              <DateRow />
              <ScrollRow />
            </div>
          </div>
          <DrawToolbar />
        </div>
        <WindowTabs />
        <Tickers />
      </main>
      <div className="h-[4px]" />
      <Taskbar />
    </div>
  )
}
